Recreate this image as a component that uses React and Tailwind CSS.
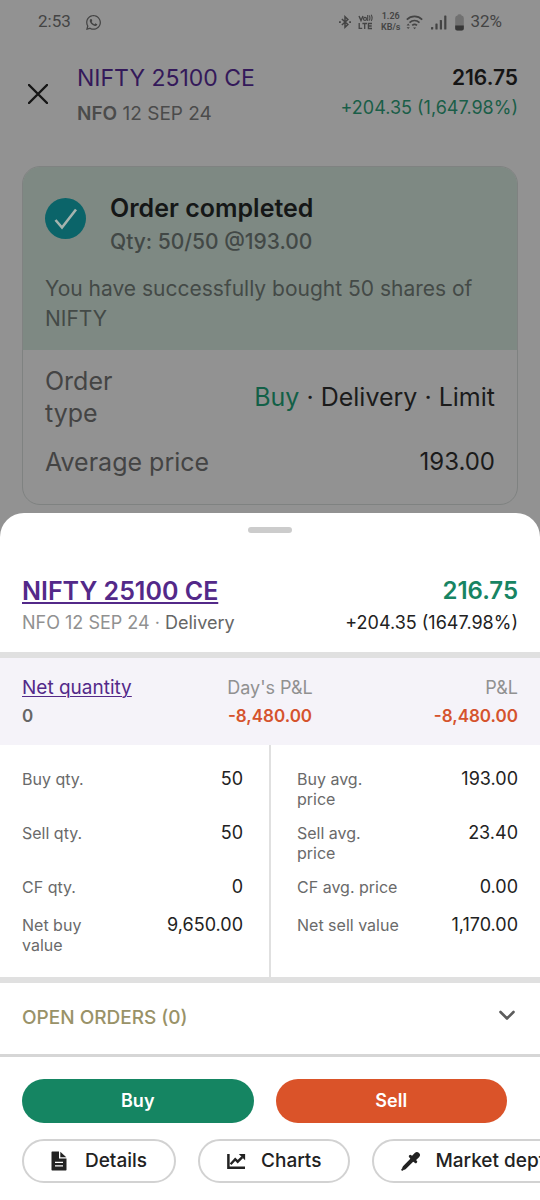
import { FaWhatsapp } from "react-icons/fa";

const leftRows = [
  ["Buy qty.", "", "50"],
  ["Sell qty.", "", "50"],
  ["CF qty.", "", "0"],
  ["Net buy", "value", "9,650.00"],
];
const rightRows = [
  ["Buy avg.", "price", "193.00"],
  ["Sell avg.", "price", "23.40"],
  ["CF avg. price", "", "0.00"],
  ["Net sell value", "", "1,170.00"],
];

function BluetoothIcon() {
  return (
    <svg width="14" height="14" viewBox="0 0 14 16" fill="none" stroke="currentColor" strokeWidth="1.7" aria-hidden="true">
      <path d="M3.4 4.6 10.300 10.900 7 14V2l3.300 3.100-6.900 6.300" />
      <path d="M.2 8h2M11.800 8h2" strokeWidth="2" />
    </svg>
  );
}

function VolteIcon() {
  return (
    <svg width="15" height="16" viewBox="0 0 15 16" fill="currentColor" role="img" aria-label="VoLTE">
      <path d="m1 2 2 4.600L5 2" fill="none" stroke="currentColor" strokeWidth="1.400" />
      <circle cx="7" cy="4.900" r="1.500" fill="none" stroke="currentColor" strokeWidth="1.200" />
      <path d="M9.700 1v6M11.300 1.500q1.300 2.400 0 5M13.200.8q1.800 3 0 6.300" fill="none" stroke="currentColor" strokeWidth="1.100" />
      <path d="M1.200 9v5.400h3M4.400 9.500h4.600M6.700 9.500v5.500M14 9.500h-3.600v5H14M10.400 12H13.700" fill="none" stroke="currentColor" strokeWidth="1.300" />
    </svg>
  );
}

function WifiIcon() {
  return (
    <svg width="17" height="15" viewBox="0 0 17 15" fill="none" stroke="currentColor" strokeWidth="1.700" aria-hidden="true">
      <path d="M.8 4.600C5.200.4 11.800.4 16.200 4.600M3.500 7.600c3-2.700 7-2.700 10 0M6.200 10.400c1.500-1.300 3.300-1.300 4.800 0" />
      <path d="m8.600 14.200-1.500-1.700h3zM2.200 8.600.6 10.400h3.200zM2.200 14 .6 12.200h3.200z" fill="currentColor" stroke="none" />
    </svg>
  );
}

function SignalIcon() {
  return (
    <svg width="16" height="15" viewBox="0 0 16 15" fill="currentColor" aria-hidden="true">
      <rect x="0" y="12" width="2.200" height="2.500" rx=".6" />
      <rect x="4.400" y="8.500" width="2.200" height="6" rx=".6" />
      <rect x="8.800" y="5" width="2.200" height="9.500" rx=".6" />
      <rect x="13.200" y=".5" width="2.200" height="14" rx=".6" />
    </svg>
  );
}

function BatteryIcon() {
  return (
    <svg width="9" height="17" viewBox="0 0 9 17" aria-hidden="true">
      <path d="M2.500 1.500Q2.500.3 4.500.3t2 1.200Q8.800 1.800 8.800 4v10.500q0 2-2 2H2.200q-2 0-2-2V4q0-2.200 2.300-2.500Z" fill="#717171" />
      <path d="M.2 11.500h8.600v3q0 2-2 2H2.200q-2 0-2-2Z" fill="#373737" />
    </svg>
  );
}

function FileIcon() {
  return (
    <svg width="16" height="20" viewBox="0 0 16 20" aria-hidden="true">
      <path d="M1.200.5h6.800v7h7.500v11.300q0 .7-.7.7H1.200q-.7 0-.7-.7V1.200q0-.7.700-.7Z" fill="currentColor" />
      <path d="M9.300.7 15.300 6.300h-6Z" fill="currentColor" />
      <path d="M4 11.300h8M4 14.900h8" stroke="#fff" strokeWidth="1.200" />
    </svg>
  );
}

function ChartIcon() {
  return (
    <svg width="19" height="17" viewBox="0 0 19 17" fill="none" aria-hidden="true">
      <path d="M1.400 1v13.700H18" stroke="currentColor" strokeWidth="2.500" />
      <path d="m3.600 11.200 4.600-5 2.500 2.500 4.600-4.500" stroke="currentColor" strokeWidth="2.400" />
      <path d="M11.800 1h6.300v6.300Z" fill="currentColor" />
    </svg>
  );
}

function DropperIcon() {
  return (
    <svg width="20" height="20" viewBox="0 0 20 20" fill="none" stroke="currentColor" strokeLinecap="round" aria-hidden="true">
      <path d="M15.900 4.100 12.500 7.500" strokeWidth="6" />
      <path d="m9.300 5.300 5.400 5.400" strokeWidth="3" />
      <path d="M11.500 8.500 3.400 16.600" strokeWidth="4" />
      <path d="M3 17 1.300 18.700" strokeWidth="2" />
    </svg>
  );
}

function Figures({ rows, className }) {
  return (
    <dl className={`flex flex-1 flex-col gap-[14px] pt-6 pb-[22px] ${className}`}>
      {rows.map(([label, rest, value]) => (
        <div key={label} className="flex min-h-6 items-start justify-between first:min-h-10 [&:nth-child(2)]:min-h-10">
          <dt className="text-base leading-5 text-[#6a6a6a]">
            {label}
            {rest && <span className="block">{rest}</span>}
          </dt>
          <dd className="text-lg leading-5 text-[#222]">{value}</dd>
        </div>
      ))}
    </dl>
  );
}

function Chip({ icon, children }) {
  return (
    <button className="flex h-11 shrink-0 items-center rounded-full border-2 border-[#d2d2d2] px-[27px] text-[19px] font-medium whitespace-nowrap text-[#222]">
      <span className="flex w-[34px]">{icon}</span>
      {children}
    </button>
  );
}

export default function App() {
  return (
    <div className="flex min-h-screen flex-col overflow-hidden bg-[#929292] font-['Inter',sans-serif]">
      <div className="flex h-11 items-center justify-between px-[38px] text-[#444]">
        <div className="flex items-center gap-[14px]">
          <span className="font-['Roboto',sans-serif] text-[17px]">2:53</span>
          <FaWhatsapp size={17} />
        </div>
        <div className="flex items-center gap-[6px]">
          <BluetoothIcon />
          <VolteIcon />
          <span className="flex flex-col items-center pl-[2px] font-['Roboto',sans-serif] text-[9px] leading-[11px] font-semibold"><span>1.26</span><span>KB/s</span></span>
          <WifiIcon />
          <span className="flex px-[2px]"><SignalIcon /></span>
          <BatteryIcon />
          <span className="font-['Roboto',sans-serif] text-[17px]">32%</span>
        </div>
      </div>

      <header className="flex items-center px-[22px] pt-5">
        <button aria-label="Close" className="mr-[23px] mb-1 p-[6px] text-[#151515]">
          <svg width="20" height="20" viewBox="0 0 20 20" stroke="currentColor" strokeWidth="2.400" strokeLinecap="round"><path d="M1 1 19 19M19 1 1 19" /></svg>
        </button>
        <div className="flex-1">
          <h1 className="text-[23px] leading-7 text-[#34195a]">NIFTY 25100 CE</h1>
          <p className="mt-2 text-[19px] leading-7 text-[#4b4b4b]"><b className="font-semibold">NFO</b> 12 SEP 24</p>
        </div>
        <div className="text-right">
          <p className="text-[21px] leading-7 font-semibold text-[#151515]">216.75</p>
          <p className="mt-[2px] mb-[6px] text-lg leading-7 text-[#1a5e48]">+204.35 (1,647.98%)</p>
        </div>
      </header>

      <section className="mx-[22px] mt-[38px] overflow-hidden rounded-[18px] border border-[#7f8281]">
        <div className="bg-[#7e8983] px-[22px] pt-[23px] pb-4">
          <div className="flex items-start">
            <svg className="mt-2 mr-6" width="41" height="41" viewBox="0 0 41 41" fill="none" aria-hidden="true">
              <circle cx="20.500" cy="20.500" r="20.500" fill="#0b6469" />
              <path d="m10.500 22 6.500 7.500 14-18" stroke="#a4b3ae" strokeWidth="2.600" />
            </svg>
            <div>
              <h2 className="text-[25px] leading-9 font-semibold text-[#151717]">Order completed</h2>
              <p className="text-[21px] leading-8 font-medium text-[#424846]">Qty: 50/50 @193.00</p>
            </div>
          </div>
          <p className="mt-4 text-[21px] leading-[30px] text-[#444a47]">You have successfully bought 50 shares of NIFTY</p>
        </div>
        <dl className="px-[22px] pt-[15px] pb-[26px] text-[25px] leading-8">
          <div className="flex items-center justify-between">
            <dt className="w-24 text-[#444]">Order type</dt>
            <dd className="text-[#1b1b1b]"><span className="text-[#126047]">Buy</span> · Delivery · Limit</dd>
          </div>
          <div className="mt-[17px] flex justify-between">
            <dt className="text-[#444]">Average price</dt>
            <dd className="text-2xl leading-8 text-[#1b1b1b]">193.00</dd>
          </div>
        </dl>
      </section>

      <main className="mt-2 flex flex-1 flex-col rounded-t-[24px] bg-white">
        <div className="mx-auto mt-[14px] h-[6px] w-11 rounded-full bg-[#ccc]" />
        <div className="flex justify-between border-b-[6px] border-[#e0e0e0] px-[22px] pt-10 pb-[15px]">
          <div>
            <h2 className="text-[25px] leading-9 font-semibold"><a href="#instrument" className="text-[#532989] underline decoration-2 underline-offset-2">NIFTY 25100 CE</a></h2>
            <p className="text-lg leading-7 text-[#919191]">NFO 12 SEP 24 · <span className="text-[#666]">Delivery</span></p>
          </div>
          <div className="text-right">
            <p className="text-2xl leading-9 font-semibold text-[#188463]">216.75</p>
            <p className="text-lg leading-7 text-[#222]">+204.35 (1647.98%)</p>
          </div>
        </div>

        <dl className="grid grid-cols-3 bg-[#f5f3f9] px-[22px] pt-4 pb-[15px] text-[19px] leading-7">
          <div>
            <dt><a href="#quantity" className="text-[#532989] underline decoration-1 underline-offset-2">Net quantity</a></dt>
            <dd className="text-[17px] leading-7 font-semibold text-[#666]">0</dd>
          </div>
          <div className="text-center">
            <dt className="text-lg leading-7 text-[#919191]">Day's P&amp;L</dt>
            <dd className="text-[17px] leading-7 font-semibold text-[#d5532d]">-8,480.00</dd>
          </div>
          <div className="text-right">
            <dt className="text-lg leading-7 text-[#919191]">P&amp;L</dt>
            <dd className="text-[17px] leading-7 font-semibold text-[#d5532d]">-8,480.00</dd>
          </div>
        </dl>

        <div className="flex border-b-[6px] border-[#e0e0e0]">
          <Figures rows={leftRows} className="pr-[26px] pl-[22px]" />
          <Figures rows={rightRows} className="border-l-2 border-[#e0e0e0] pr-[22px] pl-[26px]" />
        </div>

        <button className="flex h-[74px] items-center justify-between border-b-[3px] border-[#d6d6d6] pr-6 pl-[22px] text-[19px] font-medium text-[#999268]">
          OPEN ORDERS (0)
          <svg className="mb-[6px]" width="18" height="12" viewBox="0 0 18 12" fill="none" stroke="#5c5c5c" strokeWidth="2.600" strokeLinecap="round" strokeLinejoin="round"><path d="m2.500 2 6.500 6.500L15.500 2" /></svg>
        </button>

        <div className="grid grid-cols-2 gap-[22px] pt-[22px] pr-[33px] pl-[22px] text-lg font-semibold text-white">
          <button className="h-11 rounded-full bg-[#158562]">Buy</button>
          <button className="h-11 rounded-full bg-[#da5329]">Sell</button>
        </div>
        <div className="mt-4 flex gap-[22px] overflow-hidden pb-4 pl-[22px]">
          <Chip icon={<FileIcon />}>Details</Chip>
          <Chip icon={<ChartIcon />}>Charts</Chip>
          <Chip icon={<DropperIcon />}>Market depth</Chip>
        </div>
      </main>
    </div>
  );
}
